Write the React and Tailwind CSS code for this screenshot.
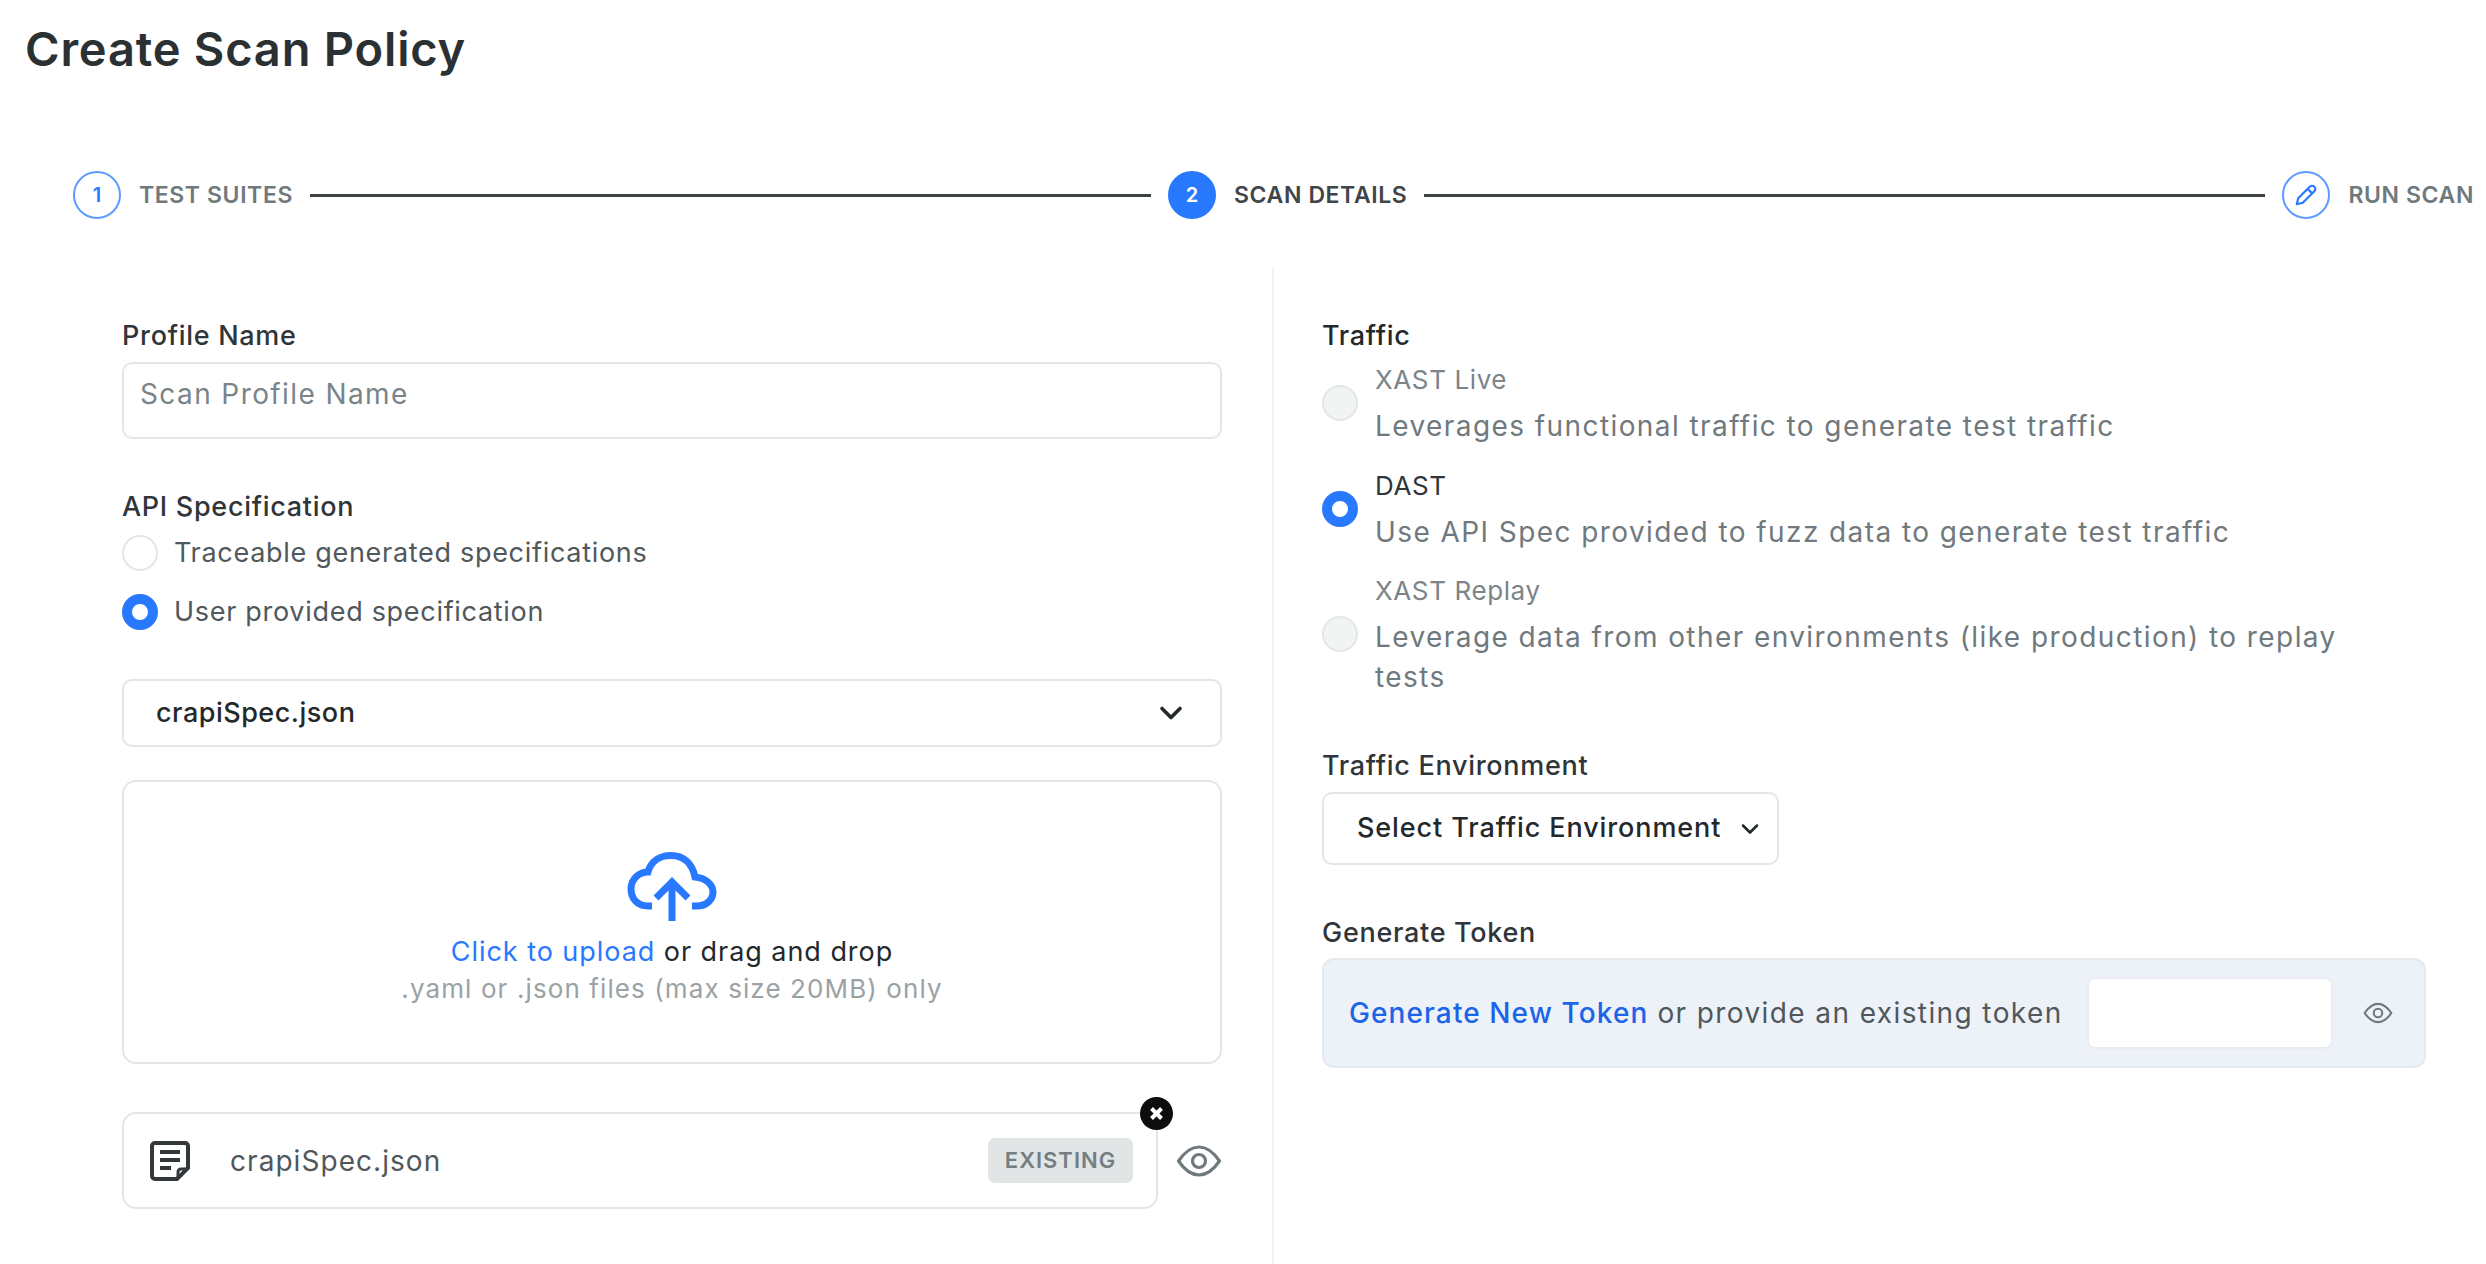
import { ChevronDown } from 'lucide-react'

// Round radio button, on / off / disabled
function Radio({ on, disabled }) {
  if (on) return <span className="block h-[36px] w-[36px] shrink-0 rounded-full border-[10px] border-[#2979ff] bg-white" />
  return (
    <span
      className={`block h-[36px] w-[36px] shrink-0 rounded-full border-2 border-[#e3e7e8] ${
        disabled ? 'bg-[#f2f4f4]' : 'bg-white'
      }`}
    />
  )
}

function EyeIcon({ width, height, className }) {
  return (
    <svg width={width} height={height} viewBox="0 0 46 32" fill="none" stroke="currentColor" strokeWidth="3.2" className={className}>
      <path d="M2.5 16C9 6.5 15.5 2 23 2C30.5 2 37 6.5 43.5 16C37 25.5 30.5 30 23 30C15.5 30 9 25.5 2.5 16Z" strokeLinejoin="round" />
      <circle cx="23" cy="16" r="6.5" />
    </svg>
  )
}

function Step({ label, active, children }) {
  return (
    <div className="flex shrink-0 items-center gap-[18px]">
      <span
        className={`flex h-[48px] w-[48px] items-center justify-center rounded-full border-2 text-[20px] font-semibold ${
          active ? 'border-[#2979ff] bg-[#2979ff] text-white' : 'border-[#5f9bff] bg-white text-[#2979ff]'
        }`}
      >
        {children}
      </span>
      <span className={`text-[23px] font-semibold tracking-[0.6px] ${active ? 'text-[#3f4548]' : 'text-[#6f797e]'}`}>
        {label}
      </span>
    </div>
  )
}

function TrafficOption({ title, desc, on, disabled }) {
  return (
    <div className="flex items-center gap-[17px]">
      <Radio on={on} disabled={disabled} />
      <div>
        <div className={`text-[26px] leading-[40px] tracking-[0.6px] ${disabled ? 'text-[#7b8488]' : 'text-[#2f3538]'}`}>{title}</div>
        <div className="mt-[6px] text-[28px] leading-[40px] tracking-[1.42px] text-[#6f797e]">{desc}</div>
      </div>
    </div>
  )
}

function Label({ className, children }) {
  return <label className={`block text-[27px] font-medium leading-[40px] tracking-[0.7px] ${className}`}>{children}</label>
}

export default function App() {
  return (
    <div className="h-[1264px] w-[2486px] overflow-hidden bg-white font-['Inter',sans-serif] text-[#2f3538]">
      <h1 className="pl-[25px] pt-[19px] text-[47px] font-semibold leading-[60px] tracking-[0.8px] text-[#2b3033]">
        Create Scan Policy
      </h1>

      {/* Stepper */}
      <div className="mt-[92px] flex items-center gap-[17px] pl-[73px] pr-[12px]">
        <Step label="TEST SUITES">1</Step>
        <div className="h-[3px] flex-1 bg-[#3d4245]" />
        <Step label="SCAN DETAILS" active>2</Step>
        <div className="h-[3px] flex-1 bg-[#3d4245]" />
        <Step label="RUN SCAN">
          <svg width="26" height="26" viewBox="0 0 24 24" fill="none" stroke="currentColor" strokeWidth="2" strokeLinejoin="round">
            <path d="M3.5 20.5L4.8 15L15.5 4.3A2.9 2.9 0 0 1 19.7 8.5L9 19.2Z" />
            <path d="M13.5 6.3L17.7 10.5" />
          </svg>
        </Step>
      </div>

      <div className="mt-[48px] flex">
        {/* Left column */}
        <div className="w-[1272px] shrink-0 pl-[122px] pr-[50px] pt-[49px]">
          <Label>Profile Name</Label>
          <div className="mt-[6px] flex h-[77px] items-start rounded-[10px] border-2 border-[#e3e7e8] pl-[16px] pt-[10px] text-[28px] leading-[40px] tracking-[1.4px] text-[#7b8488]">
            Scan Profile Name
          </div>

          <Label className="mt-[48px]">API Specification</Label>
          <div className="mt-[8px] flex items-center gap-[16px] text-[27px] leading-[36px] tracking-[0.7px] text-[#50585c]">
            <Radio />
            Traceable generated specifications
          </div>
          <div className="mt-[23px] flex items-center gap-[16px] text-[27px] leading-[36px] tracking-[0.7px] text-[#50585c]">
            <Radio on />
            User provided specification
          </div>

          <div className="mt-[49px] flex h-[68px] items-center justify-between rounded-[10px] border-2 border-[#e3e7e8] pl-[32px] pr-[31px] text-[27px] font-medium tracking-[0.5px] text-[#23282b]">
            crapiSpec.json
            <ChevronDown size={36} strokeWidth={2.4} className="text-[#23282b]" />
          </div>

          {/* Upload area */}
          <div className="mt-[33px] flex h-[284px] flex-col items-center rounded-[14px] border-2 border-[#e3e7e8] pt-[70px]">
            <svg width="90" height="70" viewBox="0 0 90 70" fill="none" stroke="#2979ff" strokeWidth="7">
              <path d="M25 54H21C10 54 4 46 4 37C4 27 12 20 21 20C24 9 33 3.5 44 3.5C56 3.5 65 11 68 25C78 26 86 32 86 40C86 48 79 54 70 54H65" />
              <path d="M45 69V30M29 46L45 30L61 46" />
            </svg>
            <div className="mt-[12px] text-[27px] leading-[36px] tracking-[0.95px] text-[#23282b]">
              <span className="text-[#2979ff]">Click to upload</span> or drag and drop
            </div>
            <div className="mt-[1px] text-[26px] leading-[36px] tracking-[1.1px] text-[#9aa2a6]">.yaml or .json files (max size 20MB) only</div>
          </div>

          {/* Uploaded file */}
          <div className="mt-[48px] flex items-center gap-[18px]">
            <div className="relative flex h-[97px] flex-1 items-center rounded-[14px] border-2 border-[#e3e7e8] pl-[25px] pr-[23px]">
              <svg width="42" height="42" viewBox="0 0 42 42" fill="none" stroke="#33383b" className="shrink-0">
                <path d="M6 3H36A3 3 0 0 1 39 6V28L28 39H6A3 3 0 0 1 3 36V6A3 3 0 0 1 6 3Z" strokeWidth="4" />
                <path d="M11 12H31M11 20H31M11 28H22" strokeWidth="3.8" />
                <path d="M39 29H32A3 3 0 0 0 29 32V39" strokeWidth="3" />
              </svg>
              <span className="ml-[39px] flex-1 text-[28px] tracking-[1.05px] text-[#50585c]">crapiSpec.json</span>
              <span className="flex h-[45px] w-[145px] items-center justify-center rounded-[7px] bg-[#e1e5e6] text-[22px] font-semibold tracking-[1px] text-[#747e83]">
                EXISTING
              </span>
              <span className="absolute right-[-17px] top-[-17px] flex h-[33px] w-[33px] items-center justify-center rounded-full bg-[#0c0d0e]">
                <svg width="15" height="15" viewBox="0 0 15 15" stroke="white" strokeWidth="4">
                  <path d="M2.5 2.5L12.5 12.5M12.5 2.5L2.5 12.5" />
                </svg>
              </span>
            </div>
            <EyeIcon width={46} height={32} className="shrink-0 text-[#6f797e]" />
          </div>
        </div>

        {/* Right column */}
        <div className="h-[1000px] flex-1 border-l-2 border-[#f1f3f3] pl-[48px] pr-[60px] pt-[49px]">
          <Label className="text-[#23282b]">Traffic</Label>
          <div className="mt-[4px]">
            <TrafficOption
              disabled
              title="XAST Live"
              desc="Leverages functional traffic to generate test traffic"
            />
          </div>
          <div className="mt-[20px]">
            <TrafficOption on title="DAST" desc="Use API Spec provided to fuzz data to generate test traffic" />
          </div>
          <div className="mt-[19px] pr-[40px]">
            <TrafficOption
              disabled
              title="XAST Replay"
              desc="Leverage data from other environments (like production) to replay tests"
            />
          </div>

          <Label className="mt-[49px]">Traffic Environment</Label>
          <div className="mt-[6px] flex h-[73px] w-[457px] items-center justify-between rounded-[10px] border-2 border-[#e3e7e8] pl-[33px] pr-[13px] text-[27px] font-medium tracking-[0.9px] text-[#23282b]">
            Select Traffic Environment
            <ChevronDown size={28} strokeWidth={2.2} />
          </div>

          <Label className="mt-[48px]">Generate Token</Label>
          <div className="mt-[5px] flex h-[110px] items-center rounded-[12px] border-2 border-[#e4e9ee] bg-[#edf2f8] pl-[25px] pr-[31px] text-[28px]">
            <span className="font-medium tracking-[1.1px] text-[#1c64e8]">Generate New Token</span>
            <span className="ml-[9px] tracking-[1.4px] text-[#50585c]">or provide an existing token</span>
            <div className="ml-auto h-[72px] w-[246px] shrink-0 rounded-[8px] border-2 border-[#e9edf1] bg-white" />
            <EyeIcon width={30} height={22} className="ml-[30px] shrink-0 text-[#6f797e]" />
          </div>
        </div>
      </div>
    </div>
  )
}
